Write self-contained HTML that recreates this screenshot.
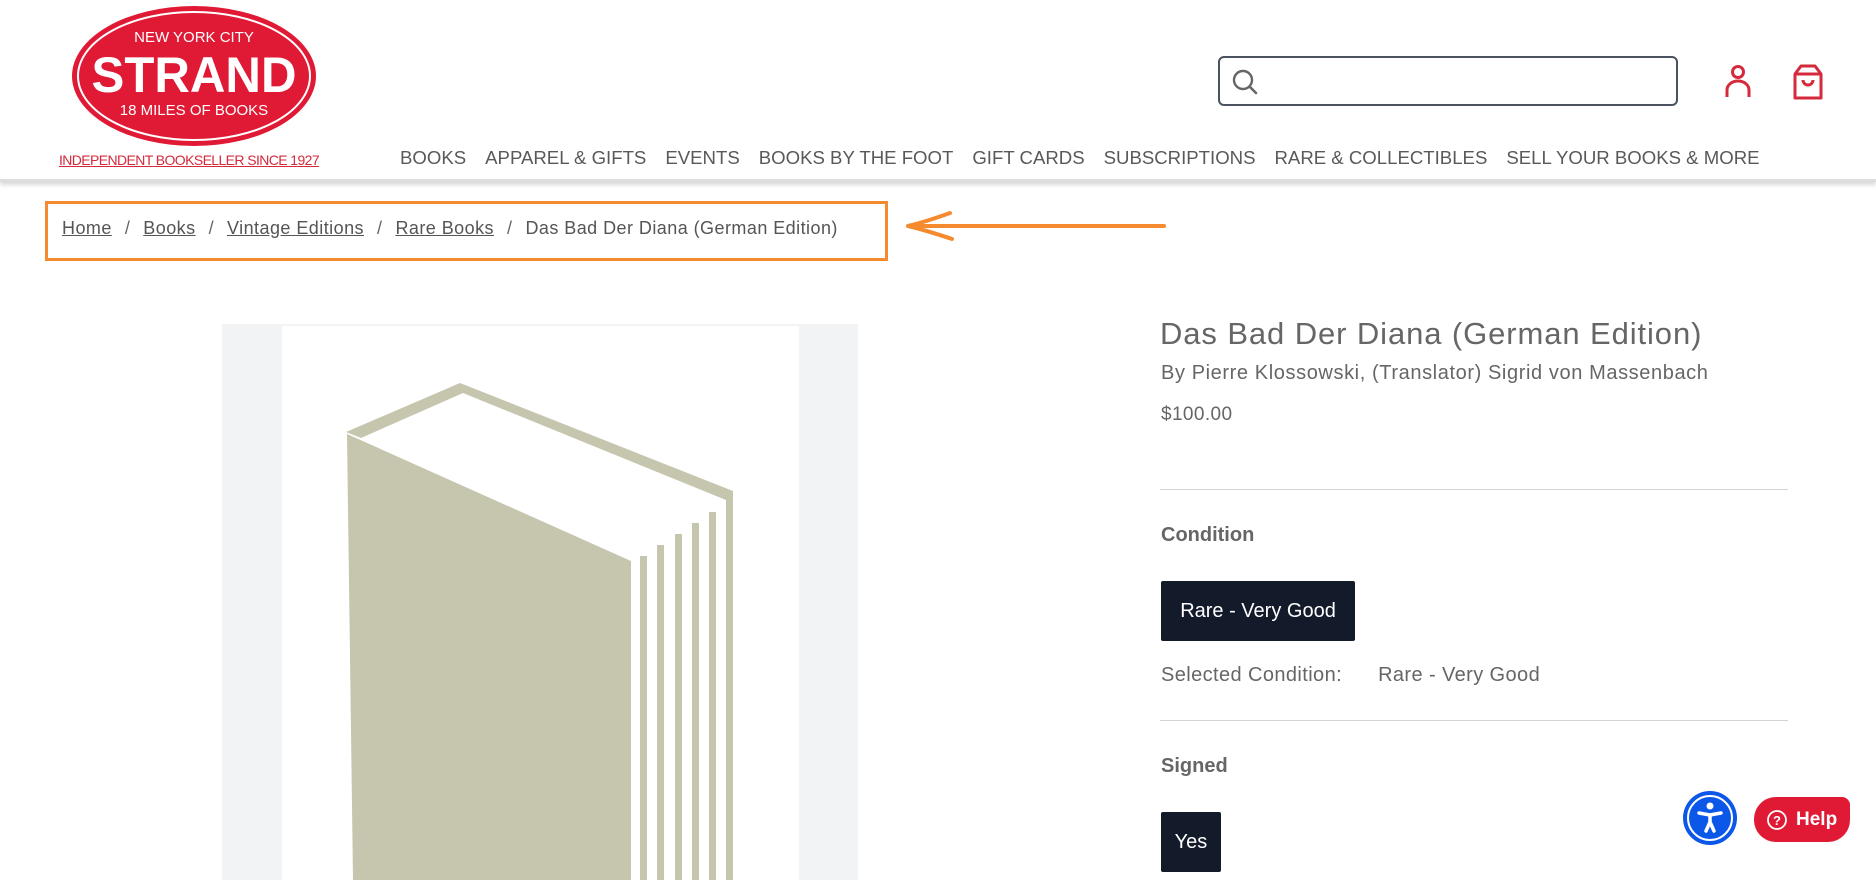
<!DOCTYPE html>
<html><head><meta charset="utf-8">
<style>
*{margin:0;padding:0;box-sizing:border-box}
body{width:1876px;height:880px;overflow:hidden;background:#fff;font-family:"Liberation Sans",sans-serif;color:#555;position:relative}
.a{position:absolute;white-space:nowrap}
.nav{top:147px;left:400px;font-size:18.6px;color:#595959;display:flex;gap:0}
.nav span{margin-right:19px}
.hdr{position:absolute;left:0;top:0;width:1876px;height:182px;border-bottom:3px solid #ddd;box-shadow:0 3px 4px rgba(0,0,0,.15)}
.bc{top:218px;left:62px;font-size:18px;color:#555;letter-spacing:0.45px}
.bc u{color:#555}
.bc i{font-style:normal;margin:0 13px;color:#666}
.btn{background:#131a2a;color:#fff;font-size:20px;display:flex;align-items:center;justify-content:center;border-radius:2px}
</style></head><body>
<div class="hdr"></div>
<svg class="a" style="left:70px;top:4px" width="250" height="145" viewBox="0 0 250 145">
<ellipse cx="124" cy="72" rx="122" ry="70" fill="#e01a35"/>
<ellipse cx="124" cy="72" rx="116" ry="64" fill="none" stroke="#fff" stroke-width="2"/>
<text x="124" y="38" text-anchor="middle" font-family="Liberation Sans" font-size="15" fill="#fff">NEW YORK CITY</text>
<text x="124" y="88" text-anchor="middle" font-family="Liberation Sans" font-weight="bold" font-size="50" fill="#fff" textLength="205" lengthAdjust="spacingAndGlyphs">STRAND</text>
<text x="124" y="111" text-anchor="middle" font-family="Liberation Sans" font-size="15" fill="#fff">18 MILES OF BOOKS</text>
</svg>
<div class="a" style="left:59px;top:152px;font-size:14px;color:#d42a3c;text-decoration:underline;letter-spacing:-0.6px">INDEPENDENT BOOKSELLER SINCE 1927</div>
<div class="a nav"><span>BOOKS</span><span>APPAREL &amp; GIFTS</span><span>EVENTS</span><span>BOOKS BY THE FOOT</span><span>GIFT CARDS</span><span>SUBSCRIPTIONS</span><span>RARE &amp; COLLECTIBLES</span><span>SELL YOUR BOOKS &amp; MORE</span></div>
<div class="a" style="left:1218px;top:56px;width:460px;height:50px;border:2px solid #4a5260;border-radius:6px"></div>
<svg class="a" style="left:1230px;top:67px" width="30" height="30" viewBox="0 0 30 30"><circle cx="13" cy="13" r="9" fill="none" stroke="#666" stroke-width="2.4"/><path d="M19.5 19.5L26 26" stroke="#666" stroke-width="2.6" stroke-linecap="round"/></svg>
<svg class="a" style="left:1720px;top:62px" width="36" height="40" viewBox="0 0 36 40"><circle cx="18" cy="10" r="5.5" fill="none" stroke="#d42a3c" stroke-width="3"/><path d="M7 35V28a11 9 0 0 1 22 0v7" fill="none" stroke="#d42a3c" stroke-width="3"/></svg>
<svg class="a" style="left:1790px;top:62px" width="36" height="40" viewBox="0 0 36 40"><path d="M5 12V36H31V12L25 4H11Z M5 12H31" fill="none" stroke="#d42a3c" stroke-width="3" stroke-linejoin="round"/><path d="M13 18a5 5 0 0 0 10 0" fill="none" stroke="#d42a3c" stroke-width="3"/></svg>

<div class="a" style="left:45px;top:201px;width:843px;height:60px;border:3px solid #f58a2f"></div>
<div class="a bc"><u>Home</u><i>/</i><u>Books</u><i>/</i><u>Vintage Editions</u><i>/</i><u>Rare Books</u><i>/</i>Das Bad Der Diana (German Edition)</div>
<svg class="a" style="left:900px;top:208px" width="270" height="36" viewBox="0 0 270 36"><path d="M8 18H264" stroke="#f58a2f" stroke-width="4" stroke-linecap="round"/><path d="M50 5Q25 14 8 18Q25 22 52 31" fill="none" stroke="#f58a2f" stroke-width="4" stroke-linecap="round"/></svg>

<div class="a" style="left:222px;top:324px;width:636px;height:556px;background:#f2f3f5"></div>
<div class="a" style="left:282px;top:326px;width:517px;height:554px;background:#fff"></div>
<svg class="a" style="left:0;top:0" width="1876" height="880">
<polygon points="346,432 460,383 733,491 733,880 726,880 726,500 463,393 361,438" fill="#c6c5ae"/>
<polygon points="347,434 631,561 631,880 353,880" fill="#c6c5ae"/>
<rect x="640" y="556" width="7" height="324" fill="#c6c5ae"/>
<rect x="657" y="545" width="7" height="335" fill="#c6c5ae"/>
<rect x="675" y="534" width="7" height="346" fill="#c6c5ae"/>
<rect x="692" y="523" width="7" height="357" fill="#c6c5ae"/>
<rect x="709" y="512" width="7" height="368" fill="#c6c5ae"/>
</svg>

<div class="a" style="left:1160px;top:316px;font-size:31px;color:#666;letter-spacing:0.9px">Das Bad Der Diana (German Edition)</div>
<div class="a" style="left:1161px;top:362px;font-size:20px;color:#666;letter-spacing:0.6px">By Pierre Klossowski, (Translator) Sigrid von Massenbach</div>
<div class="a" style="left:1161px;top:404px;font-size:19px;color:#666;letter-spacing:0.4px">$100.00</div>
<div class="a" style="left:1160px;top:489px;width:628px;height:1px;background:#d4d4d4"></div>
<div class="a" style="left:1161px;top:524px;font-size:20px;font-weight:bold;color:#666">Condition</div>
<div class="a btn" style="left:1161px;top:581px;width:194px;height:60px">Rare - Very Good</div>
<div class="a" style="left:1161px;top:664px;font-size:20px;color:#666;letter-spacing:0.4px">Selected Condition:<span style="display:inline-block;width:36px"></span>Rare - Very Good</div>
<div class="a" style="left:1160px;top:720px;width:628px;height:1px;background:#d4d4d4"></div>
<div class="a" style="left:1161px;top:755px;font-size:20px;font-weight:bold;color:#666">Signed</div>
<div class="a btn" style="left:1161px;top:812px;width:60px;height:60px">Yes</div>

<svg class="a" style="left:1682px;top:790px" width="56" height="56" viewBox="0 0 56 56"><circle cx="28" cy="28" r="27" fill="#0b57e8"/><circle cx="28" cy="28" r="22" fill="none" stroke="#fff" stroke-width="2"/><circle cx="28" cy="16" r="3.5" fill="#fff"/><path d="M17 23L28 25L39 23M28 25V32L24 41M28 32L32 41" fill="none" stroke="#fff" stroke-width="3.5" stroke-linecap="round" stroke-linejoin="round"/></svg>
<div class="a" style="left:1754px;top:797px;width:96px;height:45px;background:#e01a35;border-radius:22px 8px 22px 22px;color:#fff;font-weight:bold;font-size:19px;display:flex;align-items:center;padding-left:12px">
<svg width="22" height="22" viewBox="0 0 22 22" style="margin-right:8px"><circle cx="11" cy="11" r="9" fill="none" stroke="#fff" stroke-width="1.8"/><text x="11" y="16" text-anchor="middle" font-size="13" font-family="Liberation Sans" fill="#fff">?</text></svg>Help</div>
</body></html>
